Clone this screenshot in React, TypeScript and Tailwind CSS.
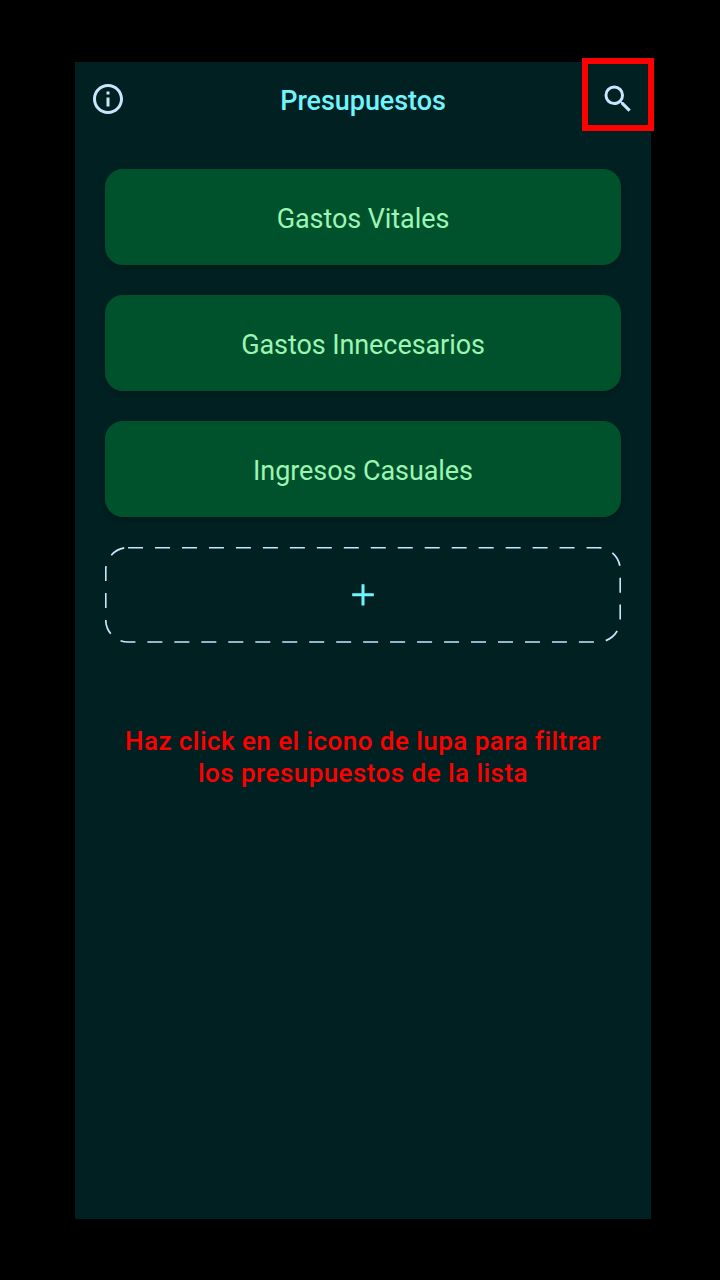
const budgets = ["Gastos Vitales", "Gastos Innecesarios", "Ingresos Casuales"];

function InfoIcon() {
  return (
    <svg viewBox="0 0 24 24" className="size-9 fill-[#c9e6ff]">
      <path d="M11 7h2v2h-2zm0 4h2v6h-2zm1-9C6.48 2 2 6.48 2 12s4.48 10 10 10 10-4.48 10-10S17.52 2 12 2zm0 18c-4.41 0-8-3.59-8-8s3.59-8 8-8 8 3.59 8 8-3.59 8-8 8z" />
    </svg>
  );
}

function SearchIcon() {
  return (
    <svg viewBox="0 0 24 24" className="size-9 fill-[#c9e6ff]">
      <path d="M15.5 14h-.79l-.28-.27A6.471 6.471 0 0 0 16 9.5 6.5 6.5 0 1 0 9.5 16c1.61 0 3.09-.59 4.23-1.57l.27.28v.79l5 4.99L20.49 19l-4.99-5zm-6 0C7.01 14 5 11.99 5 9.5S7.01 5 9.5 5 14 7.01 14 9.5 11.99 14 9.5 14z" />
    </svg>
  );
}

function AddBudget() {
  return (
    <button className="block h-24" aria-label="+">
      <svg viewBox="0 0 516 96" className="h-24 w-full" fill="none">
        <rect
          x="0.75"
          y="0.6"
          width="514.5"
          height="94.4"
          rx="22.3"
          stroke="#c9e6ff"
          strokeWidth="1.7"
          strokeDasharray="15 11.97"
        />
        <path d="M247.2 47.8h21.6M258 37.2v21.2" stroke="#70f5ff" strokeWidth="3" />
      </svg>
    </button>
  );
}

export default function App() {
  return (
    <div className="h-[1280px] w-[720px] bg-black pt-[62px] pl-[75px] font-['Roboto',sans-serif]">
      <main className="flex h-[1157px] w-[576px] flex-col bg-[#002021]">
        <header className="relative flex h-[77px] items-center justify-between pl-[15px]">
          <button aria-label="Info" className="-mt-1">
            <InfoIcon />
          </button>
          <h1 className="text-[27px] leading-8 font-medium tracking-[-0.07px] text-[#70f5ff]">Presupuestos</h1>
          <button aria-label="Buscar" className="mr-[15px] -mt-1">
            <SearchIcon />
          </button>
          <span className="pointer-events-none absolute -top-1 -right-[3px] h-[73px] w-[72px] border-6 border-[#ff0000]" />
        </header>
        <section className="flex flex-col gap-[30px] px-[30px] pt-[30px]">
          {budgets.map((name) => (
            <button
              key={name}
              className="flex h-24 items-center justify-center rounded-[18px] bg-[#00522c] pt-1 text-[27px] leading-8 tracking-[-0.08px] text-[#9cf6b3] shadow-[0_2px_5px_rgba(0,0,0,0.25)]"
            >
              {name}
            </button>
          ))}
          <AddBudget />
        </section>
        <p className="mt-[82px] text-center text-[26px] leading-8 font-medium tracking-[0.45px] text-[#ff0000]">
          Haz click en el icono de lupa para filtrar
          <br />
          <span className="tracking-[0.45px]">los presupuestos de la lista</span>
        </p>
      </main>
    </div>
  );
}
